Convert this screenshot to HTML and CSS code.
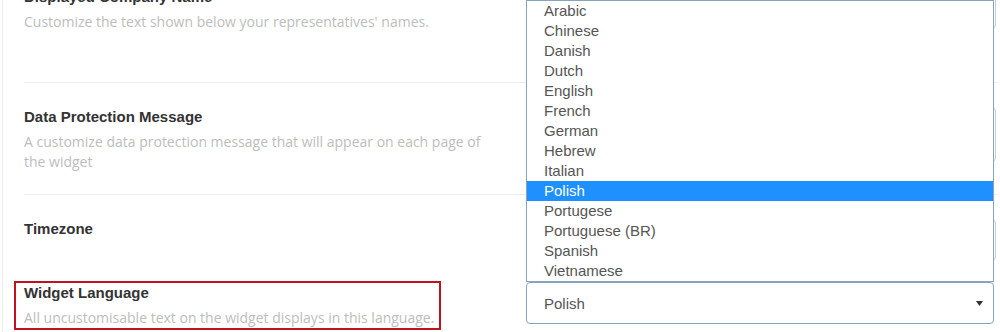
FILE: index.html
```html
<!DOCTYPE html>
<html lang="en">
<head>
    <meta charset="UTF-8">
    <meta name="viewport" content="width=device-width, initial-scale=1.0">
    <title>Widget Settings</title>
    <link rel="stylesheet" href="styles.css">
</head>
<body>
    <div class="panel">
        <div class="row first">
            <div class="label">
                <h3>Displayed Company Name</h3>
                <p>Customize the text shown below your representatives' names.</p>
            </div>
            <div class="field"><div class="input"></div></div>
        </div>
        <div class="row">
            <div class="label">
                <h3>Data Protection Message</h3>
                <p>A customize data protection message that will appear on each page of the widget</p>
            </div>
            <div class="field"><div class="input area"></div></div>
        </div>
        <div class="row plain">
            <div class="label">
                <h3>Timezone</h3>
            </div>
            <div class="field"><div class="input"></div></div>
        </div>
        <div class="row last">
            <div class="label marked">
                <h3>Widget Language</h3>
                <p>All uncustomisable text on the widget displays in this language.</p>
            </div>
            <div class="field">
                <div class="select-wrap">
                    <ul class="options">
                        <li>Arabic</li>
                        <li>Chinese</li>
                        <li>Danish</li>
                        <li>Dutch</li>
                        <li>English</li>
                        <li>French</li>
                        <li>German</li>
                        <li>Hebrew</li>
                        <li>Italian</li>
                        <li class="active">Polish</li>
                        <li>Portugese</li>
                        <li>Portuguese (BR)</li>
                        <li>Spanish</li>
                        <li>Vietnamese</li>
                    </ul>
                    <div class="select">
                        <span>Polish</span>
                        <svg width="7" height="5" viewBox="0 0 7 5"><path d="M0 0h7L3.5 5z" fill="#333"/></svg>
                    </div>
                </div>
            </div>
        </div>
    </div>
</body>
</html>
```

FILE: styles.css
```css
body {
    margin: 0;
    background-color: #fff;
    font-family: "Open Sans", sans-serif;
    overflow: hidden;
}
.panel {
    display: flow-root;
    margin-left: 2px;
    border-left: 1px solid #ececec;
    padding-left: 21px;
    width: 973px;
    height: 332px;
    overflow: hidden;
}
.row {
    display: grid;
    grid-template-columns: 476px 468px;
    column-gap: 26px;
    padding: 24px 0 22px;
    border-top: 1px solid #ececec;
}
.row.first {
    border-top: none;
    margin-top: -37px;
    padding-bottom: 50px;
}
.row.last {
    border-top: none;
    padding-top: 0;
}
.label h3 {
    margin: 0;
    font-family: "Liberation Sans", Arial, sans-serif;
    font-size: 15px;
    font-weight: bold;
    line-height: 20px;
    color: #333;
}
.label p {
    margin: 5px 0 0;
    font-size: 14px;
    line-height: 20px;
    color: #bdbdbd;
}
.marked {
    margin: -2px 0 0 -10px;
    padding: 0 5px 0 8px;
    border: 2px solid #c0111f;
    width: fit-content;
}
.field {
    position: relative;
}
.input {
    width: 468px;
    height: 40px;
    border: 1px solid #ccc;
    border-radius: 4px;
}
.input.area {
    height: 53px;
}
.select-wrap {
    position: relative;
    width: 468px;
    margin-top: -1px;
}
.select {
    display: flex;
    align-items: center;
    justify-content: space-between;
    height: 40px;
    padding: 0 10px 0 17px;
    border: 1px solid #86a3bf;
    border-radius: 4px;
    font-family: "Liberation Sans", Arial, sans-serif;
    font-size: 15px;
    color: #555;
}
.options {
    position: absolute;
    left: 0;
    right: 0;
    bottom: 100%;
    margin: 0;
    padding: 0;
    list-style: none;
    background-color: #fff;
    border: 1px solid #8aa3bd;
    font-family: "Liberation Sans", Arial, sans-serif;
    font-size: 15px;
    color: #555;
}
.options li {
    height: 20px;
    line-height: 20px;
    padding-left: 17px;
}
.options li.active {
    background-color: #1e90ff;
    color: #fff;
}
```
